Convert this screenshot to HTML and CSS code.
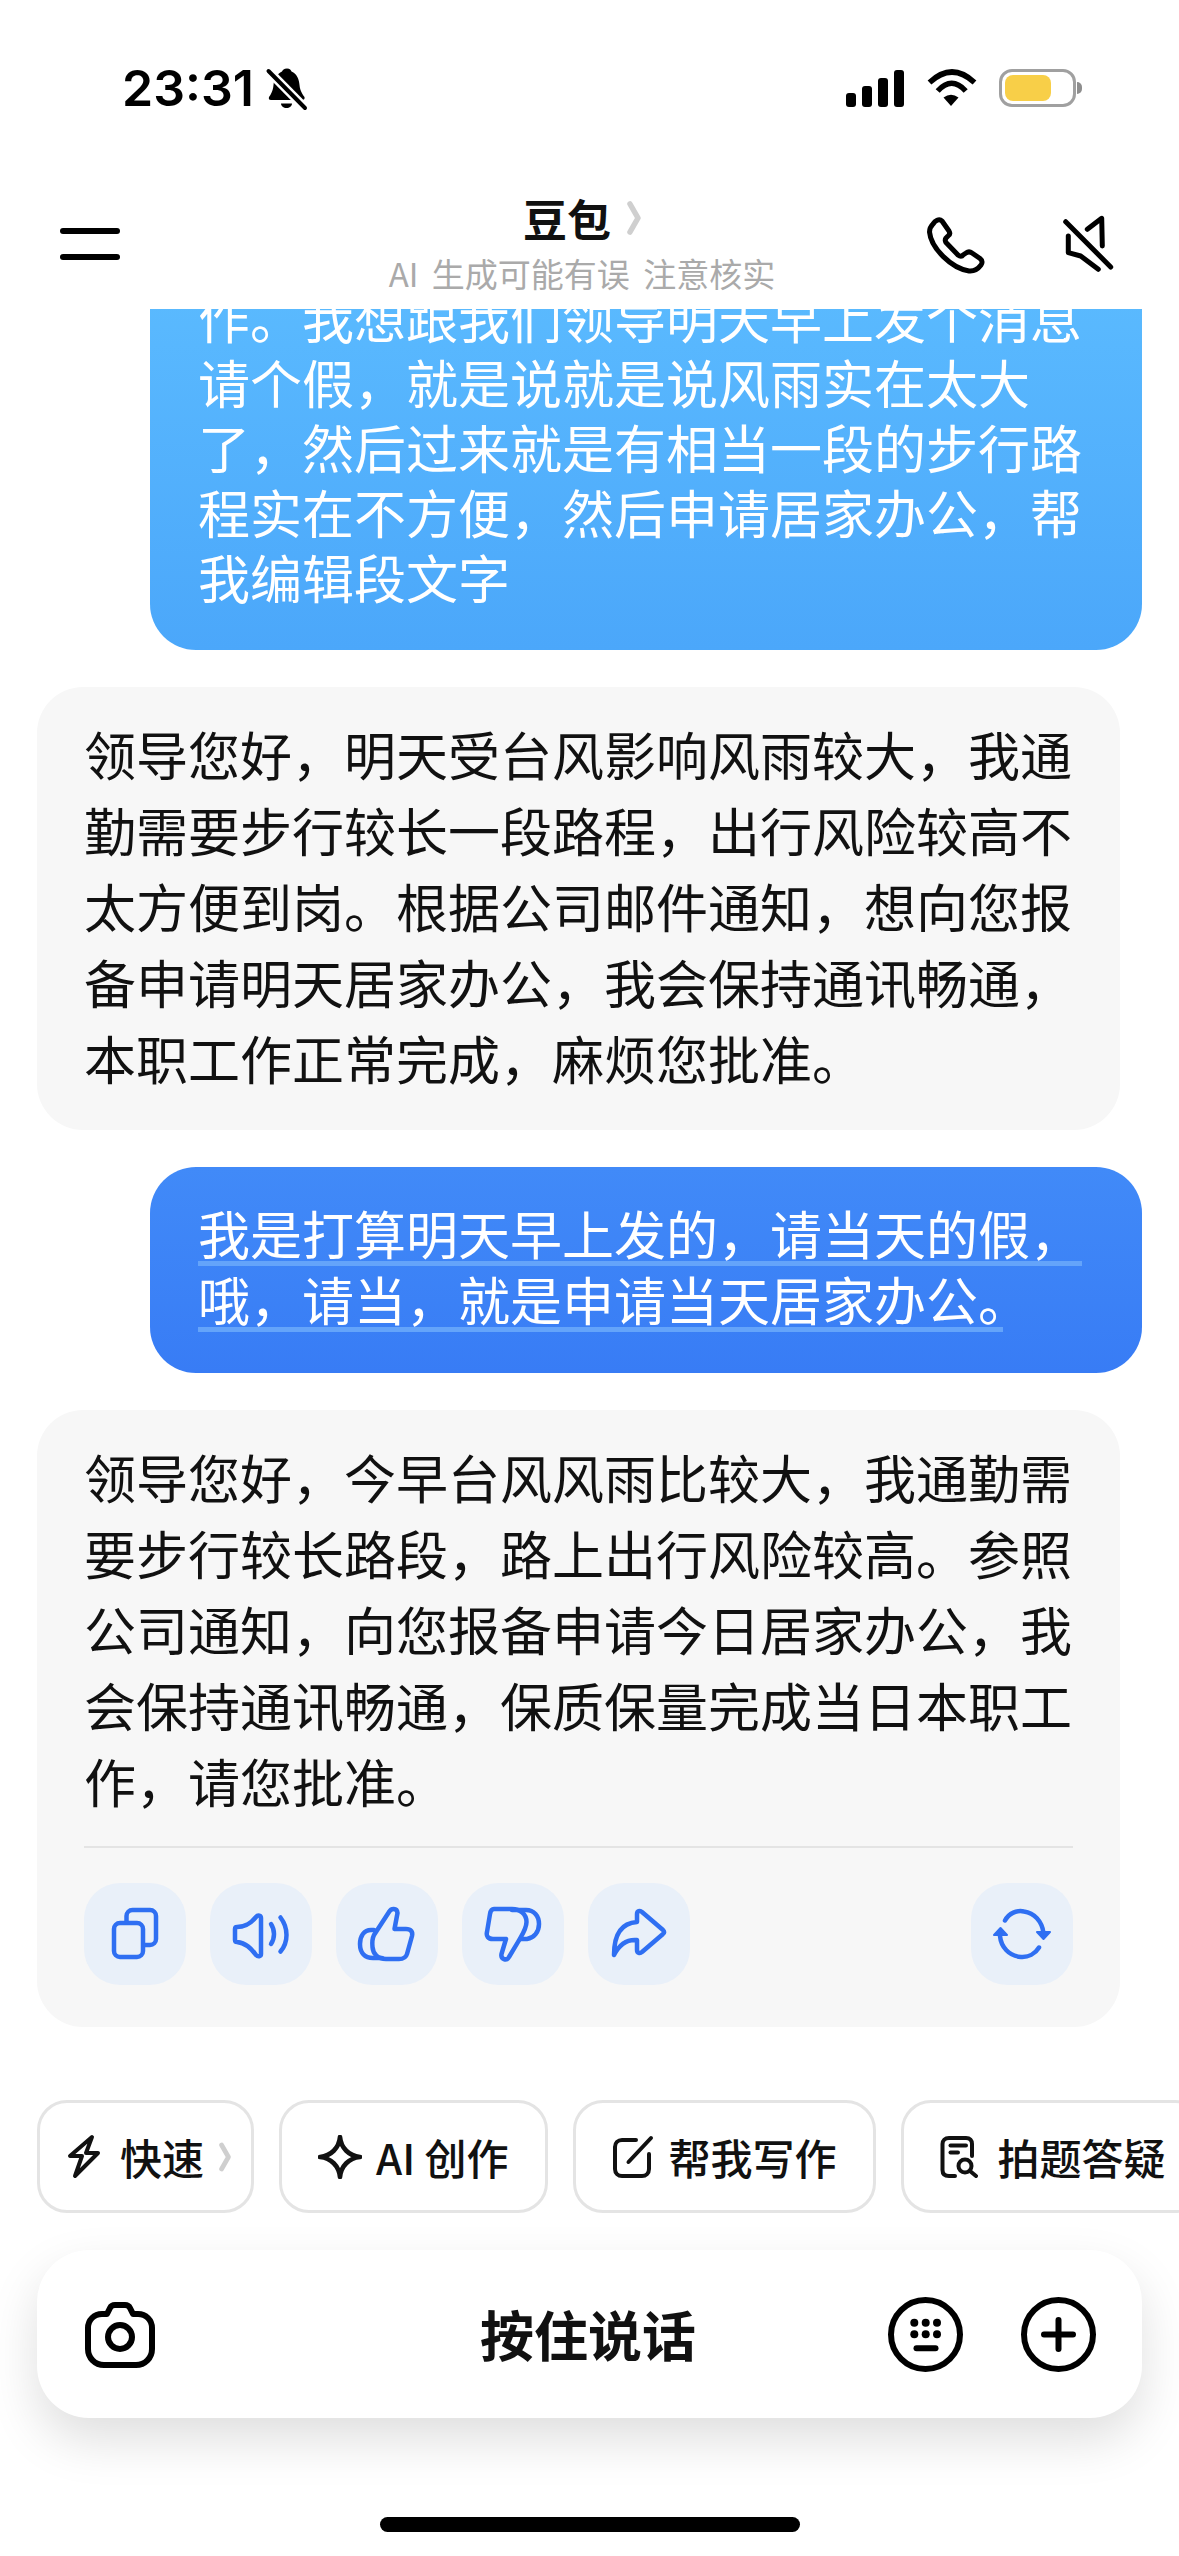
FILE: index.html
```html
<!DOCTYPE html>
<html lang="zh-CN">
<head>
    <meta charset="UTF-8">
    <meta name="viewport" content="width=device-width, initial-scale=1.0">
    <title>豆包</title>
    <link rel="stylesheet" href="styles.css">
</head>
<body>
    <div id="app">
        <div class="status-bar">
            <div class="status-left">
                <span class="clock">23:31</span>
                <svg class="bell-off" viewBox="0 0 45 45">
                    <path d="M22 2.5C25 2.5 26 4 26.5 5.5C32 8 34 13 34.5 19C35 25 38 29 39.5 31C40 33 39 34 37 34H6C4 34 3.5 33 4 31C5.5 29 8 25 8.5 19C9 13 12 8 17 5.5C17.5 4 19 2.5 22 2.5Z"/>
                    <path d="M16 37.5H27C27 40 24.5 42 21.5 42C18.5 42 16 40 16 37.5Z"/>
                    <path class="bell-gap" d="M3.5 5L40 42"/>
                    <path class="bell-slash" d="M3.5 5L40 42"/>
                </svg>
            </div>
            <div class="status-right">
                <div class="signal">
                    <span class="bar-1"></span>
                    <span class="bar-2"></span>
                    <span class="bar-3"></span>
                    <span class="bar-4"></span>
                </div>
                <svg class="wifi" viewBox="0 0 54 40">
                    <path class="wifi-arc" d="M4.5 14.5Q27 -6.5 49.5 14.5"/>
                    <path class="wifi-arc" d="M12.7 23Q26.7 7.6 40.7 23"/>
                    <path d="M26 38L18.5 29.5Q26 24 33.5 29.5Z"/>
                </svg>
                <div class="battery"><span class="battery-level"></span></div>
                <span class="battery-cap"></span>
            </div>
        </div>

        <header>
            <div class="menu-btn"><span></span><span></span></div>
            <div class="title-block">
                <h1>豆包<svg class="chevron" viewBox="0 0 14 34"><path d="M3 3L11 17L3 31"/></svg></h1>
                <p>AI 生成可能有误 注意核实</p>
            </div>
            <div class="header-actions">
                <svg class="phone-icon" viewBox="0 0 60 60">
                    <path d="M8 9C10 6 14 3 17 6L24 16C25.5 18.5 24.5 20 23 21L21 23C20 24.5 20 26 21 27.5L33 40C35 41.5 37 41.5 38 40L41 38C43 36.5 45 36.5 47 38L55 43.5C57.5 45.5 57.5 48 56 50C53 54 49 56.5 44 56C26 53 6 33 4.5 17C4.5 14 6 11 8 9Z"/>
                </svg>
                <svg class="mute-icon" viewBox="0 0 56 60">
                    <path d="M6.7 6.7L51.7 52"/>
                    <path d="M28.3 14.3L42.7 3.3L43.3 31"/>
                    <path d="M9.3 21V37.7L21.7 41L39.3 54.3"/>
                </svg>
            </div>
        </header>

        <main id="messages">
            <div class="bubble user light">
                作。我想跟我们领导明天早上发个消息<br>
                请个假，就是说就是说风雨实在太大<br>
                了，然后过来就是有相当一段的步行路<br>
                程实在不方便，然后申请居家办公，帮<br>
                我编辑段文字
            </div>

            <div class="bubble bot">
                领导您好，明天受台风影响风雨较大，我通<br>
                勤需要步行较长一段路程，出行风险较高不<br>
                太方便到岗。根据公司邮件通知，想向您报<br>
                备申请明天居家办公，我会保持通讯畅通，<br>
                本职工作正常完成，麻烦您批准。
            </div>

            <div class="bubble user deep">
                <span class="voice-line">我是打算明天早上发的，请当天的假，</span>
                <span class="voice-line voice-end">哦，请当，就是申请当天居家办公。</span>
            </div>

            <div class="bubble bot">
                领导您好，今早台风风雨比较大，我通勤需<br>
                要步行较长路段，路上出行风险较高。参照<br>
                公司通知，向您报备申请今日居家办公，我<br>
                会保持通讯畅通，保质保量完成当日本职工<br>
                作，请您批准。
                <div class="msg-actions">
                    <button class="act-btn">
                        <svg viewBox="0 0 102 102">
                            <rect x="30" y="40" width="29" height="34" rx="6"/>
                            <path d="M42.5 38V33A6 6 0 0 1 48.5 27H66A6 6 0 0 1 72 33V56A6 6 0 0 1 66 62H61"/>
                        </svg>
                    </button>
                    <button class="act-btn">
                        <svg viewBox="0 0 102 102">
                            <path d="M27 44C36 44 41 40 46 34C48 31.5 51 32.5 51 35V71C51 73.5 48 74 46 72C41 65 36 60 27 59C25.5 59 25 58 25 57V46C25 45 25.5 44 27 44Z"/>
                            <path d="M61 41C65 47 65 55 61 61"/>
                            <path d="M70.5 34.5C78.5 45 78.5 59 70.5 68.5"/>
                        </svg>
                    </button>
                    <button class="act-btn">
                        <svg viewBox="0 0 102 102">
                            <path d="M38 52L53 29C55 25 61 24.5 61.5 30L58.5 46H70C75 46 77 49 76 53L71 71C70 74.5 67 76 63 76H50C42 76 37 71 36.5 64C36 59 36 56 38 52Z"/>
                            <path d="M38 47H35C28 47 24 53 24 61C24 70 29 75 37 75H46"/>
                        </svg>
                    </button>
                    <button class="act-btn">
                        <svg viewBox="0 0 102 102">
                            <path d="M32 26H50C58 26 64.5 31 64.5 39C64.5 46 60 52 56 59L47 74C44.5 78.5 38.5 76 39.5 71L44 56H31C26 56 24 53 25 49L28 31C28.5 28 30 26 32 26Z"/>
                            <path d="M50 27H64C72 27 77 33 77 41C77 49 72 55 65 56H58.5"/>
                        </svg>
                    </button>
                    <button class="act-btn">
                        <svg viewBox="0 0 102 102">
                            <path d="M49 39V31C49 28 52 27 54 29L75 47C76.5 48.5 76.5 50 75 51L54 69C52 71 49 70 49 67V57C38 56 31 62 26 72C26 52 33 40 49 39Z"/>
                        </svg>
                    </button>
                    <button class="act-btn retry">
                        <svg viewBox="0 0 102 102">
                            <path d="M34 37.5C38 30 46 27 53 28.5C63 30 71 38 72.5 50"/>
                            <path class="solid" d="M66 49H79L72.5 56Z"/>
                            <path d="M29 53C30 64 38 73 50 74C57 74.500 64 71 68 64.500"/>
                            <path class="solid" d="M23 52H36L29.500 45Z"/>
                        </svg>
                    </button>
                </div>
            </div>
        </main>

        <nav class="chips">
            <div class="chip speed">
                <svg class="chip-icon bolt" viewBox="0 0 34 45"><path d="M25 3L3 22H15L8 42L31 19H19L25 3Z"/></svg>
                <span>快速</span>
                <svg class="chevron" viewBox="0 0 14 34"><path d="M3 3L11 17L3 31"/></svg>
            </div>
            <div class="chip">
                <svg class="chip-icon star" viewBox="0 0 44 44"><path d="M22 2C23 13 31 21 42 22C31 23 23 31 22 42C21 31 13 23 2 22C13 21 21 13 22 2Z"/></svg>
                <span>AI 创作</span>
            </div>
            <div class="chip">
                <svg class="chip-icon note" viewBox="0 0 42 44">
                    <path d="M24 5H10C6 5 3 8 3 12V34C3 38 6 41 10 41H30C34 41 37 38 37 34V19"/>
                    <path d="M16.500 27L39 3"/>
                </svg>
                <span>帮我写作</span>
            </div>
            <div class="chip">
                <svg class="chip-icon scan" viewBox="0 0 38 44">
                    <path d="M32 21V9C32 5.500 30 3 26 3H9C5 3 2.500 5.500 2.500 9V35C2.500 39 5 41 9 41H15"/>
                    <path d="M10.500 10.500H26"/>
                    <path d="M10.500 17.500H18"/>
                    <circle cx="25" cy="31" r="6.500"/>
                    <path d="M30 36L36 41"/>
                </svg>
                <span>拍题答疑</span>
            </div>
        </nav>

        <div id="input-area">
            <svg class="camera-icon" viewBox="0 0 80 75">
                <path d="M27 17L30 11C31 9 33 8 35 8H45C47 8 49 9 50 11L53 17H58C66 17 72 23 72 31V52C72 61 65 68 56 68H24C15 68 8 61 8 52V31C8 23 14 17 22 17Z"/>
                <circle cx="40" cy="40" r="12"/>
            </svg>
            <div class="hold-talk">按住说话</div>
            <div class="input-tools">
                <svg class="tool-icon" viewBox="0 0 75 75">
                    <circle cx="37.500" cy="37.500" r="34.500"/>
                    <g class="keys">
                        <circle cx="26.300" cy="25.700" r="4"/>
                        <circle cx="37.700" cy="25.700" r="4"/>
                        <circle cx="49" cy="25.700" r="4"/>
                        <circle cx="26.300" cy="37.300" r="4"/>
                        <circle cx="37.700" cy="37.300" r="4"/>
                        <circle cx="49" cy="37.300" r="4"/>
                    </g>
                    <path d="M28.500 51.300H47.500"/>
                </svg>
                <svg class="tool-icon" viewBox="0 0 75 75">
                    <circle cx="37.500" cy="37.500" r="34.500"/>
                    <path d="M23 37.500H52M37.500 23V52"/>
                </svg>
            </div>
        </div>

        <div class="home-area"><span class="home-bar"></span></div>
    </div>
</body>
</html>
```

FILE: styles.css
```css
:root {
    --text-color: #111;
    --bot-bg: #f7f7f7;
    --accent: #2f6ff2;
    --act-bg: #e9f0f9;
    --chip-border: #e4e4e4;
    --chevron-color: #cfcfcf;
    --cjk: "Noto Sans CJK SC", "Noto Sans", sans-serif;
}
* {
    box-sizing: border-box;
}
body {
    font-family: var(--cjk);
    background-color: #fff;
    color: var(--text-color);
    margin: 0;
    padding: 0;
    overflow: hidden;
}
#app {
    display: flex;
    flex-direction: column;
    width: 1179px;
    height: 2556px;
    overflow: hidden;
}
svg {
    display: block;
    flex-shrink: 0;
}

/* status bar */
.status-bar {
    height: 120px;
    flex-shrink: 0;
    padding: 56px 97px 0 122px;
    display: flex;
    justify-content: space-between;
    align-items: center;
}
.status-left {
    display: flex;
    align-items: center;
    gap: 11px;
}
.clock {
    font-family: Inter, "Liberation Sans", sans-serif;
    font-size: 50px;
    font-weight: 600;
    line-height: 50px;
    color: #000;
}
.bell-off {
    width: 45px;
    height: 45px;
}
.bell-gap {
    stroke: #fff;
    stroke-width: 9;
}
.bell-slash {
    stroke: #000;
    stroke-width: 4;
    stroke-linecap: round;
}
.status-right {
    display: flex;
    align-items: center;
}
.signal {
    display: flex;
    align-items: flex-end;
    gap: 6px;
    height: 37px;
    margin-right: 21px;
}
.signal span {
    display: block;
    width: 10px;
    background-color: #000;
    border-radius: 3px;
}
.bar-1 { height: 14px; }
.bar-2 { height: 21px; }
.bar-3 { height: 29px; }
.bar-4 { height: 37px; }
.wifi {
    width: 54px;
    height: 40px;
    margin-right: 20px;
}
.wifi-arc {
    fill: none;
    stroke: #000;
    stroke-width: 5.5;
}
.battery {
    width: 77px;
    height: 38px;
    border: 3px solid #a0a0a0;
    border-radius: 13px;
    padding: 3px;
}
.battery-level {
    display: block;
    width: 46px;
    height: 26px;
    background-color: #f8cf48;
    border-radius: 8px;
}
.battery-cap {
    width: 5px;
    height: 12px;
    margin-left: 1px;
    background-color: #8e8e8e;
    border-radius: 0 6px 6px 0;
}

/* title row */
header {
    position: relative;
    z-index: 2;
    height: 189px;
    flex-shrink: 0;
    padding: 56px 75px 0 60px;
    display: grid;
    grid-template-columns: 1fr auto 1fr;
    align-items: center;
    background-color: #fff;
}
.menu-btn {
    display: flex;
    flex-direction: column;
    gap: 20px;
    margin-top: 2px;
}
.menu-btn span {
    display: block;
    width: 60px;
    height: 6px;
    background-color: #000;
    border-radius: 3px;
}
.title-block {
    text-align: center;
}
h1 {
    margin: 0;
    font-size: 44px;
    font-weight: 700;
    line-height: 50px;
    display: flex;
    justify-content: center;
    align-items: center;
    gap: 16px;
}
.title-block p {
    margin: 10px 0 0;
    font-size: 33px;
    line-height: 40px;
    word-spacing: 6px;
    color: #aaa;
}
.chevron {
    width: 14px;
    height: 34px;
    fill: none;
    stroke: var(--chevron-color);
    stroke-width: 5.5;
    stroke-linecap: round;
    stroke-linejoin: round;
}
.header-actions {
    display: flex;
    justify-content: flex-end;
    align-items: center;
    gap: 74px;
    margin-top: 4px;
    margin-right: -11px;
}
.phone-icon,
.mute-icon {
    height: 60px;
    fill: none;
    stroke: #000;
    stroke-width: 5;
    stroke-linecap: round;
    stroke-linejoin: round;
}
.phone-icon { width: 60px; }
.mute-icon { width: 56px; }

/* messages */
#messages {
    flex: 1;
    min-height: 0;
    overflow: hidden;
    padding: 0 37px 73px;
    display: flex;
    flex-direction: column;
    justify-content: flex-end;
    gap: 37px;
}
.bubble {
    flex-shrink: 0;
    font-size: 52px;
    border-radius: 46px;
}
.user {
    align-self: flex-end;
    width: 992px;
    padding: 33px 40px 41px 48px;
    line-height: 65px;
    color: #fff;
}
.user.light {
    background: linear-gradient(#5cbcff, #4ba7fa);
}
.user.deep {
    background: linear-gradient(#418af8, #387cf5);
}
.voice-line {
    display: block;
    width: 884px;
    height: 66px;
    white-space: nowrap;
    border-bottom: 5px solid #64a4fa;
}
.voice-end {
    width: 805px;
}
.bot {
    align-self: flex-start;
    width: 1083px;
    padding: 29px 30px 34px 47px;
    background-color: var(--bot-bg);
    line-height: 76px;
    color: #111;
}

/* actions under a reply */
.msg-actions {
    margin-top: 27px;
    margin-right: 17px;
    padding-top: 35px;
    padding-bottom: 8px;
    border-top: 2px solid #e4e4e4;
    display: flex;
    gap: 24px;
}
.act-btn {
    width: 102px;
    height: 102px;
    padding: 0;
    border: none;
    border-radius: 36px;
    background-color: var(--act-bg);
}
.act-btn svg {
    width: 102px;
    height: 102px;
    fill: none;
    stroke: var(--accent);
    stroke-width: 4.5;
    stroke-linecap: round;
    stroke-linejoin: round;
}
.act-btn .solid {
    fill: var(--accent);
    stroke-width: 2;
}
.retry {
    margin-left: auto;
}

/* quick chips */
.chips {
    flex-shrink: 0;
    padding-left: 37px;
    display: flex;
    gap: 25px;
}
.chip {
    height: 113px;
    flex-shrink: 0;
    padding: 0 36px;
    border: 3px solid var(--chip-border);
    border-radius: 30px;
    display: flex;
    align-items: center;
    gap: 14px;
    font-size: 42px;
    font-weight: 500;
    white-space: nowrap;
}
.chip.speed {
    padding: 0 20px 0 27px;
}
.speed .chevron {
    width: 12px;
    margin-left: 1px;
}
.chip-icon {
    fill: none;
    stroke: #111;
    stroke-width: 4;
    stroke-linecap: round;
    stroke-linejoin: round;
}
.bolt { width: 34px; height: 45px; margin-right: 5px; }
.star { width: 44px; height: 44px; stroke-width: 4.6; }
.note { width: 42px; height: 44px; margin-right: 1px; }
.scan { width: 38px; height: 44px; margin-right: 6px; }

/* voice input bar */
#input-area {
    flex-shrink: 0;
    height: 168px;
    margin: 37px 37px 0;
    padding: 0 46px 0 43px;
    display: grid;
    grid-template-columns: 1fr auto 1fr;
    align-items: center;
    background-color: #fff;
    border-radius: 52px;
    box-shadow: 0 22px 50px rgba(0, 0, 0, 0.13);
}
.camera-icon {
    width: 80px;
    height: 75px;
    fill: none;
    stroke: #000;
    stroke-width: 6;
    stroke-linejoin: round;
}
.hold-talk {
    font-size: 54px;
    font-weight: 700;
    line-height: 60px;
    color: #111;
}
.input-tools {
    display: flex;
    justify-content: flex-end;
    gap: 58px;
}
.tool-icon {
    width: 75px;
    height: 75px;
    fill: none;
    stroke: #000;
    stroke-width: 6;
    stroke-linecap: round;
}
.keys circle {
    fill: #000;
    stroke: none;
}

/* home indicator */
.home-area {
    flex: none;
    height: 138px;
    display: flex;
    justify-content: center;
    align-items: flex-end;
    padding-bottom: 24px;
}
.home-bar {
    display: block;
    width: 420px;
    height: 15px;
    background-color: #000;
    border-radius: 8px;
}
```
